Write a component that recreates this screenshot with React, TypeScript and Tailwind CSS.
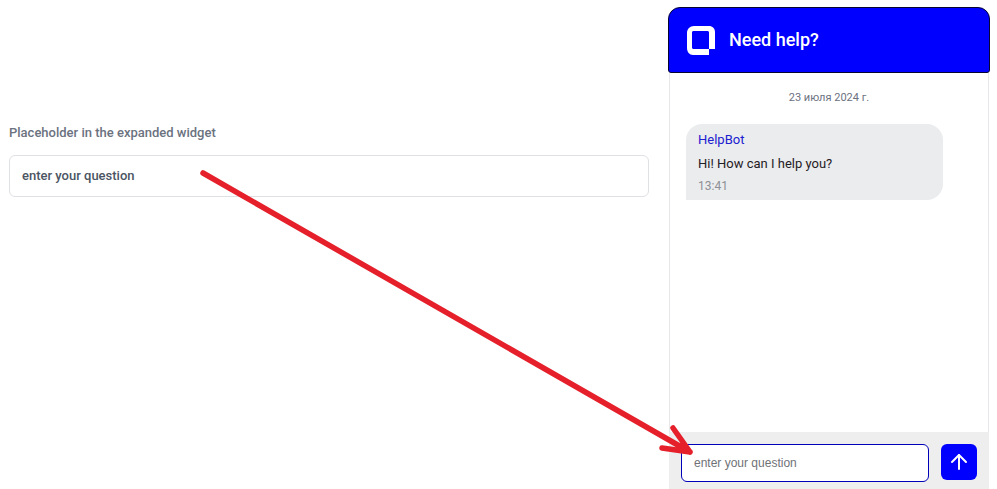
import React from 'react';
import { ArrowUp } from 'lucide-react';

const Logo = () => (
  <svg width="30" height="30" viewBox="0 0 30 30" fill="none">
    <path
      fill="#fff"
      fillRule="evenodd"
      d="M8 1H23C26.5 1 29 3.5 29 7V24H23V30H7C3.5 30 1 27 1 23V8C1 4 4 1 8 1ZM7.5 6C6.7 6 6 6.7 6 7.5V22.5C6 23.3 6.7 24 7.5 24H23V7.5C23 6.7 22.3 6 21.5 6H7.5Z"
    />
  </svg>
);

export default function App() {
  return (
    <div className="relative flex h-[489px] w-[997px] overflow-hidden bg-white font-['Roboto',sans-serif]">
      {/* Settings field */}
      <div className="w-[669px] pl-[9px] pr-5 pt-[125px]">
        <label className="block text-[13px] font-medium leading-4 text-[#6b7280]">
          Placeholder in the expanded widget
        </label>
        <div className="mt-[14px] flex h-[42px] items-center rounded-md border border-[#dfe1e5] px-3 text-[13px] font-medium text-[#4b5563]">
          enter your question
        </div>
      </div>

      {/* Chat widget */}
      <div className="mt-[7px] flex w-[320px] flex-col">
        <div className="-mx-px flex h-[66px] items-center gap-[13px] rounded-t-xl rounded-b-[3px] border border-[#050530] bg-[#0000ff] pl-[17px]">
          <Logo />
          <span className="text-lg font-medium text-white">Need help?</span>
        </div>
        <div className="flex flex-1 flex-col border-x border-[#e5e7eb] px-4">
          <div className="mt-[18px] text-center text-[11px] leading-[14px] text-[#6b7280]">23 июля 2024 г.</div>
          <div className="mt-[19px] h-[76px] w-[257px] rounded-2xl rounded-bl-none bg-[#ebecee] px-3 pt-2">
            <div className="text-[13px] leading-4 text-[#2020d0]">HelpBot</div>
            <div className="mt-2 text-[13px] leading-4 text-[#1f2024]">Hi! How can I help you?</div>
            <div className="mt-[6px] text-xs leading-4 text-[#8d9096]">13:41</div>
          </div>
        </div>
        <div className="flex h-[57px] gap-3 bg-[#eeeeee] px-3 pt-3">
          <div className="flex h-[38px] w-[248px] items-center rounded-md border border-[#0000b8] bg-white px-3 text-xs text-[#6f7277] font-['Liberation_Sans',sans-serif]">
            enter your question
          </div>
          <button className="flex h-9 w-9 items-center justify-center rounded-md bg-[#0000ff] text-white">
            <ArrowUp className="h-6 w-6" strokeWidth={2} />
          </button>
        </div>
      </div>

      {/* Annotation arrow */}
      <svg className="absolute inset-0" width="997" height="489" fill="none">
        <path
          d="M203 173L690 452M690 452L673 428M690 452L662 448"
          stroke="#e5202b"
          strokeWidth="5.5"
          strokeLinecap="round"
          strokeLinejoin="round"
        />
      </svg>
    </div>
  );
}
